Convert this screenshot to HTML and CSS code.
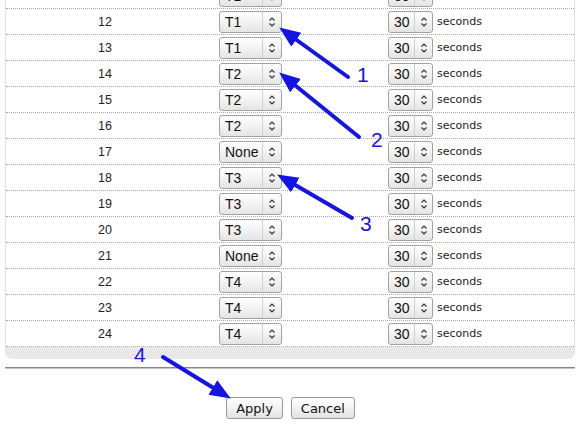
FILE: index.html
```html
<!DOCTYPE html>
<html>
<head>
<meta charset="utf-8">
<link rel="stylesheet" href="styles.css">
</head>
<body>
<div class="panel">
  <div class="row"><div class="num"></div><div class="cell-t"><div class="select t"><span class="val">T1</span><span class="arr"><svg viewBox="0 0 8 12" width="8" height="12"><path d="M1.5 4.5 L4 2 L6.5 4.5 M1.5 7.5 L4 10 L6.5 7.5"/></svg></span></div></div><div class="cell-s"><div class="select s"><span class="val">30</span><span class="arr"><svg viewBox="0 0 8 12" width="8" height="12"><path d="M1.5 4.5 L4 2 L6.5 4.5 M1.5 7.5 L4 10 L6.5 7.5"/></svg></span></div></div></div>
  <div class="row"><div class="num">12</div><div class="cell-t"><div class="select t"><span class="val">T1</span><span class="arr"><svg viewBox="0 0 8 12" width="8" height="12"><path d="M1.5 4.5 L4 2 L6.5 4.5 M1.5 7.5 L4 10 L6.5 7.5"/></svg></span></div></div><div class="cell-s"><div class="select s"><span class="val">30</span><span class="arr"><svg viewBox="0 0 8 12" width="8" height="12"><path d="M1.5 4.5 L4 2 L6.5 4.5 M1.5 7.5 L4 10 L6.5 7.5"/></svg></span></div><span class="unit">seconds</span></div></div>
  <div class="row"><div class="num">13</div><div class="cell-t"><div class="select t"><span class="val">T1</span><span class="arr"><svg viewBox="0 0 8 12" width="8" height="12"><path d="M1.5 4.5 L4 2 L6.5 4.5 M1.5 7.5 L4 10 L6.5 7.5"/></svg></span></div></div><div class="cell-s"><div class="select s"><span class="val">30</span><span class="arr"><svg viewBox="0 0 8 12" width="8" height="12"><path d="M1.5 4.5 L4 2 L6.5 4.5 M1.5 7.5 L4 10 L6.5 7.5"/></svg></span></div><span class="unit">seconds</span></div></div>
  <div class="row"><div class="num">14</div><div class="cell-t"><div class="select t"><span class="val">T2</span><span class="arr"><svg viewBox="0 0 8 12" width="8" height="12"><path d="M1.5 4.5 L4 2 L6.5 4.5 M1.5 7.5 L4 10 L6.5 7.5"/></svg></span></div></div><div class="cell-s"><div class="select s"><span class="val">30</span><span class="arr"><svg viewBox="0 0 8 12" width="8" height="12"><path d="M1.5 4.5 L4 2 L6.5 4.5 M1.5 7.5 L4 10 L6.5 7.5"/></svg></span></div><span class="unit">seconds</span></div></div>
  <div class="row"><div class="num">15</div><div class="cell-t"><div class="select t"><span class="val">T2</span><span class="arr"><svg viewBox="0 0 8 12" width="8" height="12"><path d="M1.5 4.5 L4 2 L6.5 4.5 M1.5 7.5 L4 10 L6.5 7.5"/></svg></span></div></div><div class="cell-s"><div class="select s"><span class="val">30</span><span class="arr"><svg viewBox="0 0 8 12" width="8" height="12"><path d="M1.5 4.5 L4 2 L6.5 4.5 M1.5 7.5 L4 10 L6.5 7.5"/></svg></span></div><span class="unit">seconds</span></div></div>
  <div class="row"><div class="num">16</div><div class="cell-t"><div class="select t"><span class="val">T2</span><span class="arr"><svg viewBox="0 0 8 12" width="8" height="12"><path d="M1.5 4.5 L4 2 L6.5 4.5 M1.5 7.5 L4 10 L6.5 7.5"/></svg></span></div></div><div class="cell-s"><div class="select s"><span class="val">30</span><span class="arr"><svg viewBox="0 0 8 12" width="8" height="12"><path d="M1.5 4.5 L4 2 L6.5 4.5 M1.5 7.5 L4 10 L6.5 7.5"/></svg></span></div><span class="unit">seconds</span></div></div>
  <div class="row"><div class="num">17</div><div class="cell-t"><div class="select t"><span class="val">None</span><span class="arr"><svg viewBox="0 0 8 12" width="8" height="12"><path d="M1.5 4.5 L4 2 L6.5 4.5 M1.5 7.5 L4 10 L6.5 7.5"/></svg></span></div></div><div class="cell-s"><div class="select s"><span class="val">30</span><span class="arr"><svg viewBox="0 0 8 12" width="8" height="12"><path d="M1.5 4.5 L4 2 L6.5 4.5 M1.5 7.5 L4 10 L6.5 7.5"/></svg></span></div><span class="unit">seconds</span></div></div>
  <div class="row"><div class="num">18</div><div class="cell-t"><div class="select t"><span class="val">T3</span><span class="arr"><svg viewBox="0 0 8 12" width="8" height="12"><path d="M1.5 4.5 L4 2 L6.5 4.5 M1.5 7.5 L4 10 L6.5 7.5"/></svg></span></div></div><div class="cell-s"><div class="select s"><span class="val">30</span><span class="arr"><svg viewBox="0 0 8 12" width="8" height="12"><path d="M1.5 4.5 L4 2 L6.5 4.5 M1.5 7.5 L4 10 L6.5 7.5"/></svg></span></div><span class="unit">seconds</span></div></div>
  <div class="row"><div class="num">19</div><div class="cell-t"><div class="select t"><span class="val">T3</span><span class="arr"><svg viewBox="0 0 8 12" width="8" height="12"><path d="M1.5 4.5 L4 2 L6.5 4.5 M1.5 7.5 L4 10 L6.5 7.5"/></svg></span></div></div><div class="cell-s"><div class="select s"><span class="val">30</span><span class="arr"><svg viewBox="0 0 8 12" width="8" height="12"><path d="M1.5 4.5 L4 2 L6.5 4.5 M1.5 7.5 L4 10 L6.5 7.5"/></svg></span></div><span class="unit">seconds</span></div></div>
  <div class="row"><div class="num">20</div><div class="cell-t"><div class="select t"><span class="val">T3</span><span class="arr"><svg viewBox="0 0 8 12" width="8" height="12"><path d="M1.5 4.5 L4 2 L6.5 4.5 M1.5 7.5 L4 10 L6.5 7.5"/></svg></span></div></div><div class="cell-s"><div class="select s"><span class="val">30</span><span class="arr"><svg viewBox="0 0 8 12" width="8" height="12"><path d="M1.5 4.5 L4 2 L6.5 4.5 M1.5 7.5 L4 10 L6.5 7.5"/></svg></span></div><span class="unit">seconds</span></div></div>
  <div class="row"><div class="num">21</div><div class="cell-t"><div class="select t"><span class="val">None</span><span class="arr"><svg viewBox="0 0 8 12" width="8" height="12"><path d="M1.5 4.5 L4 2 L6.5 4.5 M1.5 7.5 L4 10 L6.5 7.5"/></svg></span></div></div><div class="cell-s"><div class="select s"><span class="val">30</span><span class="arr"><svg viewBox="0 0 8 12" width="8" height="12"><path d="M1.5 4.5 L4 2 L6.5 4.5 M1.5 7.5 L4 10 L6.5 7.5"/></svg></span></div><span class="unit">seconds</span></div></div>
  <div class="row"><div class="num">22</div><div class="cell-t"><div class="select t"><span class="val">T4</span><span class="arr"><svg viewBox="0 0 8 12" width="8" height="12"><path d="M1.5 4.5 L4 2 L6.5 4.5 M1.5 7.5 L4 10 L6.5 7.5"/></svg></span></div></div><div class="cell-s"><div class="select s"><span class="val">30</span><span class="arr"><svg viewBox="0 0 8 12" width="8" height="12"><path d="M1.5 4.5 L4 2 L6.5 4.5 M1.5 7.5 L4 10 L6.5 7.5"/></svg></span></div><span class="unit">seconds</span></div></div>
  <div class="row"><div class="num">23</div><div class="cell-t"><div class="select t"><span class="val">T4</span><span class="arr"><svg viewBox="0 0 8 12" width="8" height="12"><path d="M1.5 4.5 L4 2 L6.5 4.5 M1.5 7.5 L4 10 L6.5 7.5"/></svg></span></div></div><div class="cell-s"><div class="select s"><span class="val">30</span><span class="arr"><svg viewBox="0 0 8 12" width="8" height="12"><path d="M1.5 4.5 L4 2 L6.5 4.5 M1.5 7.5 L4 10 L6.5 7.5"/></svg></span></div><span class="unit">seconds</span></div></div>
  <div class="row"><div class="num">24</div><div class="cell-t"><div class="select t"><span class="val">T4</span><span class="arr"><svg viewBox="0 0 8 12" width="8" height="12"><path d="M1.5 4.5 L4 2 L6.5 4.5 M1.5 7.5 L4 10 L6.5 7.5"/></svg></span></div></div><div class="cell-s"><div class="select s"><span class="val">30</span><span class="arr"><svg viewBox="0 0 8 12" width="8" height="12"><path d="M1.5 4.5 L4 2 L6.5 4.5 M1.5 7.5 L4 10 L6.5 7.5"/></svg></span></div><span class="unit">seconds</span></div></div>
  <div class="panel-foot"></div>
</div>
<div class="divider"></div>
<div class="actions">
  <button class="btn">Apply</button>
  <button class="btn">Cancel</button>
</div>
<svg class="annot" width="586" height="426" viewBox="0 0 586 426">
  <defs>
    <marker id="head" markerUnits="userSpaceOnUse" markerWidth="22" markerHeight="18" refX="9" refY="8.5" orient="auto">
      <path d="M0 0 L21 8.5 L0 17 Z" fill="#1414e6"/>
    </marker>
  </defs>
  <g class="lines">
    <line x1="348" y1="77" x2="289" y2="34.5" marker-end="url(#head)"/>
    <line x1="359" y1="137" x2="288.5" y2="80" marker-end="url(#head)"/>
    <line x1="352" y1="218" x2="287.5" y2="180.5" marker-end="url(#head)"/>
    <line x1="163" y1="357" x2="220.5" y2="392.2" marker-end="url(#head)"/>
  </g>
  <g class="labels">
    <text x="357" y="82">1</text>
    <text x="371" y="147">2</text>
    <text x="360" y="231">3</text>
    <text x="134" y="362">4</text>
  </g>
</svg>
</body>
</html>
```

FILE: styles.css
```css
html, body {
  margin: 0;
  padding: 0;
  background: #ffffff;
}

body {
  position: relative;
  width: 586px;
  height: 426px;
  overflow: hidden;
  font-family: "Liberation Sans", Arial, sans-serif;
  color: #222;
}

.panel {
  margin: -17px 11px 0 5px;
  border-left: 1px solid #e2e2e2;
  border-right: 1px solid #e2e2e2;
  border-radius: 0 0 7px 7px;
  overflow: hidden;
}

.row {
  display: grid;
  grid-template-columns: 198px 184px 1fr;
  align-items: center;
  height: 25px;
  border-bottom: 1px dotted #a6a6a6;
}

.num {
  text-align: center;
  font-size: 12.5px;
  color: #222;
}

.cell-t {
  padding-left: 15px;
  display: flex;
  align-items: center;
}

.cell-s {
  display: flex;
  align-items: center;
}

.select {
  display: flex;
  height: 22px;
  box-sizing: border-box;
  border: 1px solid #a3a3a3;
  border-radius: 3px;
  background: linear-gradient(#ffffff, #f3f3f3 50%, #e4e4e4);
  font-size: 14px;
  color: #111;
}

.select .val {
  display: flex;
  align-items: center;
  padding-left: 5px;
  box-sizing: border-box;
}

.select.t { width: 63px; }
.select.t .val { width: 42px; }
.select.s { width: 45px; }
.select.s .val { width: 25px; }

.select .arr {
  flex: 1;
  border-left: 1px solid #cfcfcf;
  display: flex;
  align-items: center;
  justify-content: center;
}

.select .arr svg path {
  fill: none;
  stroke: #333;
  stroke-width: 1.2;
}

.unit {
  margin-left: 4px;
  font-family: "DejaVu Sans", Verdana, sans-serif;
  font-size: 11px;
  color: #222;
}

.panel-foot {
  height: 12px;
  background: #e8e8e8;
}

.divider {
  margin: 8px 11px 0 5px;
  border-top: 1px solid #858585;
  border-bottom: 1px solid #c4c4c4;
}

.actions {
  display: flex;
  justify-content: center;
  gap: 8px;
  margin: 28px 5px 0 0;
}

.btn {
  height: 22px;
  padding: 0 9px;
  box-sizing: border-box;
  border: 1px solid #9a9a9a;
  border-radius: 3px;
  background: linear-gradient(#ffffff, #f2f2f2 50%, #e2e2e2);
  font-family: "DejaVu Sans", Verdana, sans-serif;
  font-size: 13px;
  color: #111;
}

.annot {
  position: absolute;
  top: 0;
  left: 0;
  pointer-events: none;
}

.annot .lines line {
  stroke: #1414e6;
  stroke-width: 4;
  stroke-linecap: round;
}

.annot .labels text {
  fill: #1414e6;
  font-family: "Liberation Sans", Arial, sans-serif;
  font-size: 21px;
}
```
